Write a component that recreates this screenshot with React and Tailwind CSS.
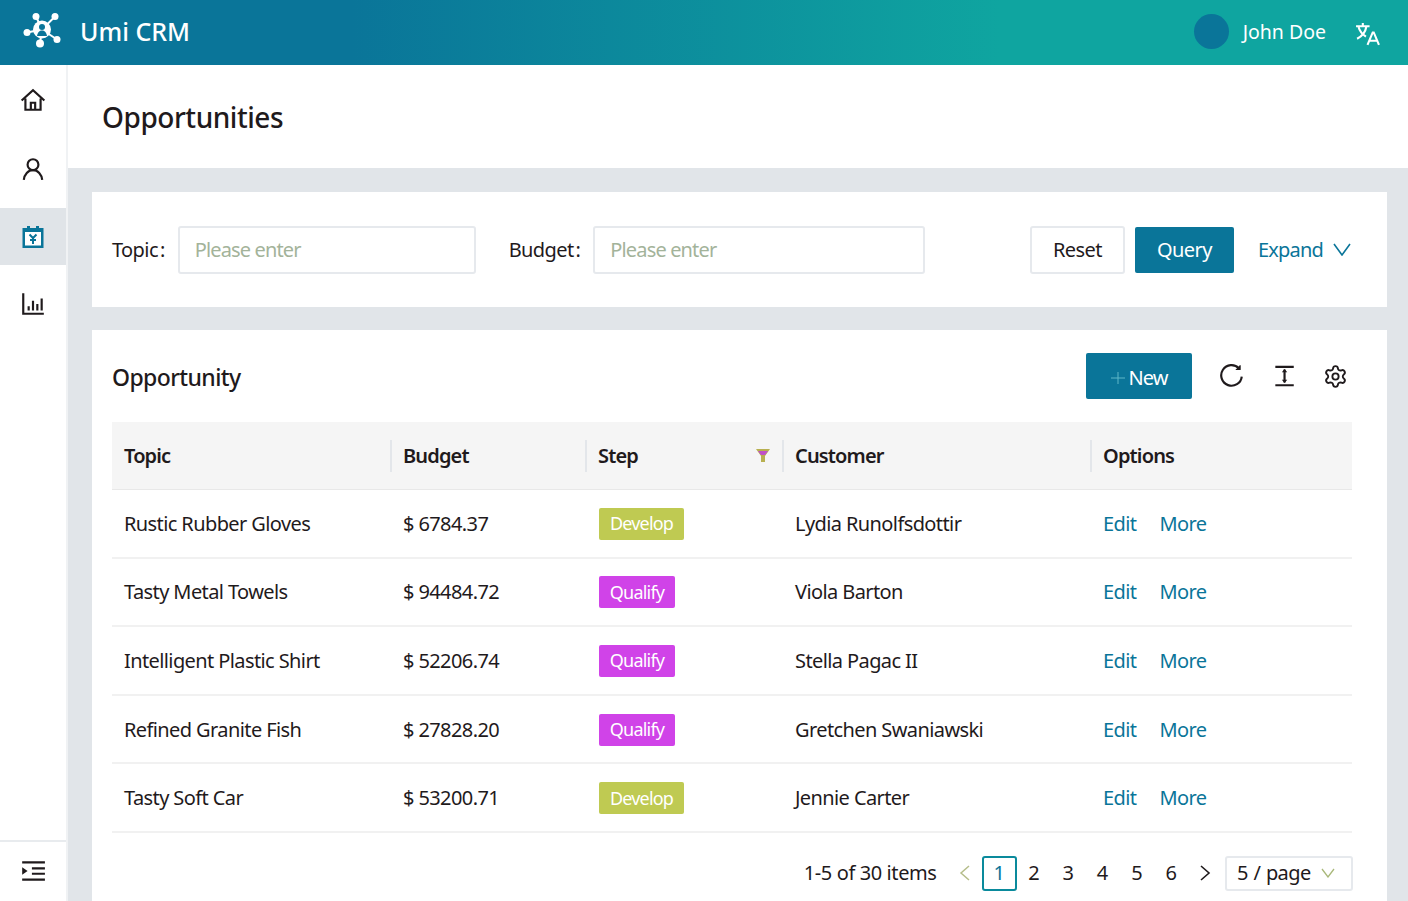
import { Settings } from 'lucide-react';

const rows = [
  { topic: 'Rustic Rubber Gloves', budget: '$ 6784.37', step: 'Develop', customer: 'Lydia Runolfsdottir' },
  { topic: 'Tasty Metal Towels', budget: '$ 94484.72', step: 'Qualify', customer: 'Viola Barton' },
  { topic: 'Intelligent Plastic Shirt', budget: '$ 52206.74', step: 'Qualify', customer: 'Stella Pagac II' },
  { topic: 'Refined Granite Fish', budget: '$ 27828.20', step: 'Qualify', customer: 'Gretchen Swaniawski' },
  { topic: 'Tasty Soft Car', budget: '$ 53200.71', step: 'Develop', customer: 'Jennie Carter' },
];

const cols = 'grid grid-cols-[279px_195px_197px_308px_261px]';

function Logo() {
  return (
    <svg viewBox="0 0 40 40" className="w-10 h-10 text-white" fill="currentColor" stroke="currentColor">
      <g strokeWidth="2">
        <line x1="20" y1="17.500" x2="14" y2="4.500" />
        <line x1="20" y1="17.500" x2="33" y2="4.500" />
        <line x1="20" y1="17.500" x2="5" y2="20.500" />
        <line x1="20" y1="17.500" x2="18" y2="31" />
        <line x1="20" y1="17.500" x2="35" y2="27.500" />
      </g>
      <circle cx="14" cy="4.500" r="3.500" stroke="none" />
      <circle cx="33" cy="4.500" r="3.500" stroke="none" />
      <circle cx="5" cy="20.500" r="3.500" stroke="none" />
      <circle cx="18" cy="31.500" r="4" stroke="none" />
      <circle cx="35" cy="27.500" r="3.500" stroke="none" />
      <circle cx="20" cy="17.500" r="9" stroke="none" />
      <circle cx="20" cy="15" r="3" fill="#0a7599" stroke="none" />
      <path d="M15 24c.8-4 2.500-5.500 5-5.500s4.200 1.500 5 5.500z" fill="#0a7599" stroke="none" />
    </svg>
  );
}

function NavIcon({ children }) {
  return (
    <svg viewBox="0 0 24 24" className="w-[26px] h-[26px]" fill="none" stroke="currentColor" strokeWidth="2">
      {children}
    </svg>
  );
}

function Sidebar() {
  return (
    <aside className="w-[68px] shrink-0 bg-white flex flex-col border-r-2 border-[#f0f2f4] text-[#1f1a1c]">
      <div className="h-[69px] flex items-center justify-center">
        <NavIcon>
          <path d="M1.500 12.500 12 3l10.500 9.500M5 10.500V21h14V10.500M10 21v-6.500h4V21" />
        </NavIcon>
      </div>
      <div className="h-[69px] flex items-center justify-center">
        <NavIcon>
          <circle cx="12" cy="8" r="5" />
          <path d="M3.500 22c.5-5 4-9 8.500-9s8 4 8.500 9" />
        </NavIcon>
      </div>
      <div className="h-[57px] w-[66px] mt-[5px] bg-[#e0e4e8] flex items-center justify-center">
        <svg viewBox="0 0 24 24" className="w-6 h-6">
          <rect x="1.500" y="3" width="21" height="20" fill="#0a7599" />
          <rect x="4" y="7" width="16" height="13.500" fill="#fff" />
          <rect x="6" y="1" width="3" height="6" fill="#0a7599" />
          <rect x="15" y="1" width="3" height="6" fill="#0a7599" />
          <path d="M8.500 9.500 12 13l3.500-3.500M12 13v6M9 15h6" stroke="#0a7599" strokeWidth="2" fill="none" />
        </svg>
      </div>
      <div className="h-[69px] mt-[4px] flex items-center justify-center">
        <NavIcon>
          <path d="M3 2v19h19" />
          <path d="M8 18v-4M12 18V9M16 18v-6M20 18V7" />
        </NavIcon>
      </div>
      <div className="mt-auto h-[60px] mb-px border-t-2 border-[#e8ebee] flex items-center justify-center">
        <NavIcon>
          <path d="M2 4h21M11 9.500h12M11 14.500h12M2 20h21" />
          <path d="M2 8.500v7l5-3.500z" fill="currentColor" stroke="none" />
        </NavIcon>
      </div>
    </aside>
  );
}

function SearchField({ label, width }) {
  return (
    <div className="flex items-center">
      <span className="text-[#1f1a1c]">{label}</span>
      <span className="ml-0.5 text-[#1f1a1c]">:</span>
      <div className={`${width} h-12 ml-[13px] border-2 border-[#e6e9ed] rounded-[3px] flex items-center pt-px px-[15px] text-[#a3b39a] tracking-[-0.85px]`}>
        Please enter
      </div>
    </div>
  );
}

function Tag({ step }) {
  if (step === 'Develop') {
    return <span className="ml-px h-8 w-[85px] rounded-[2px] bg-[#bfca52] text-white flex items-center justify-center text-[18px] tracking-[-0.8px]">Develop</span>;
  }
  return <span className="ml-px h-8 w-[76px] rounded-[2px] bg-[#d043e8] text-white flex items-center justify-center text-[18px] tracking-[-0.8px]">Qualify</span>;
}

function HeadCell({ children, first }) {
  return (
    <div className="relative flex items-center px-3 h-full font-semibold text-[#1f1a1c] tracking-[-0.85px]">
      {!first && <span className="absolute left-[-1px] top-[18px] h-8 w-[2px] bg-[#e3e6ea]" />}
      {children}
    </div>
  );
}

export default function App() {
  return (
    <div className="h-screen overflow-hidden flex flex-col bg-[#e1e5e9] text-[20px] font-['Noto_Sans',sans-serif] tracking-[-0.6px]">
      <header className="h-[65px] shrink-0 flex items-center pb-0.5 bg-[linear-gradient(90deg,#0a7599_25%,#0fa5a0_71%)] text-white">
        <div className="ml-[22px] w-10"><Logo /></div>
        <span className="ml-[18px] text-[25px] font-medium tracking-normal">Umi CRM</span>
        <div className="ml-auto flex items-center">
          <span className="w-[35px] h-[35px] rounded-full bg-[#0a7599]" />
          <span className="ml-[14px] tracking-normal text-[19.500px]">John Doe</span>
          <svg viewBox="0 0 24 24" className="w-[25px] h-[25px] ml-[29px] mr-[28px] mt-[3px]" fill="none" stroke="currentColor" strokeWidth="2">
            <path d="M1 5h13M7.500 2v3M11 5c-1 6-5 10-9 12M3.500 6c1 4 4 7 7 9" />
            <path d="M12 23l5-12h1l5 12M14 19h7" />
          </svg>
        </div>
      </header>

      <div className="flex-1 min-h-0 flex">
        <Sidebar />
        <main className="flex-1 min-w-0 flex flex-col">
          <div className="h-[103px] shrink-0 bg-white flex items-center pl-[34px]">
            <h1 className="text-[28px] font-medium text-[#1f1a1c] tracking-[-0.45px]">Opportunities</h1>
          </div>

          <section className="mt-[24px] ml-6 mr-[21px] h-[115px] shrink-0 bg-white flex items-center pl-5 pr-9">
            <SearchField label="Topic" width="w-[298px]" />
            <div className="ml-[33px]">
              <SearchField label="Budget" width="w-[332px]" />
            </div>
            <button className="ml-auto h-12 w-[95px] border-2 border-[#e6e9ed] rounded-[3px] text-[#1f1a1c] bg-white">Reset</button>
            <button className="ml-[10px] h-[46px] w-[99px] rounded-[2px] bg-[#0a7599] text-white">Query</button>
            <span className="ml-6 text-[#0a7599] tracking-[-0.8px]">Expand</span>
            <svg viewBox="0 0 18 13" className="ml-[10px] w-[18px] h-[13px] text-[#0a7599]" fill="none" stroke="currentColor" strokeWidth="1.600">
              <path d="M1 1l8 11 8-11" />
            </svg>
          </section>

          <section className="mt-[23px] ml-6 mr-[21px] flex-1 bg-white pl-5 pr-[35px]">
            <div className="h-[92px] flex items-center">
              <h2 className="pt-0.5 text-[23px] font-medium text-[#1f1a1c]">Opportunity</h2>
              <button className="ml-auto h-[46px] w-[106px] pt-[3px] rounded-[2px] bg-[#0a7599] text-white flex items-center justify-center gap-[4px] tracking-[-1px]">
                <svg viewBox="0 0 14 14" className="w-[14px] h-[14px] text-[#5fb8c8]" fill="none" stroke="currentColor" strokeWidth="1">
                  <path d="M0 7h14M7 1v12" />
                </svg>
                New
              </button>
              <div className="ml-[27px] mr-[4px] flex items-center gap-[26px] text-[#1f1a1c]">
                <svg viewBox="0 0 24 24" className="w-[26px] h-[26px]" fill="none" stroke="currentColor" strokeWidth="2">
                  <path d="M21 12.500A9.500 9.500 0 1 1 18.500 5" />
                  <path d="M19.500 2v4h-4" fill="currentColor" strokeWidth="1" />
                </svg>
                <svg viewBox="0 0 24 24" className="w-[26px] h-[26px]" fill="none" stroke="currentColor" strokeWidth="2">
                  <path d="M4 3.500h17M4 20.500h17M12.500 6v12" />
                  <path d="M12.500 5.500l-2.500 3h5zM12.500 18.500l-2.500-3h5z" fill="currentColor" stroke="none" />
                </svg>
                <Settings size={25} strokeWidth={1.8} />
              </div>
            </div>

            <div className={`${cols} h-[68px] bg-[#f5f5f5] border-b border-[#e8e8e8]`}>
              <HeadCell first>Topic</HeadCell>
              <HeadCell>Budget</HeadCell>
              <HeadCell>
                Step
                <svg viewBox="0 0 16 16" className="absolute right-3 top-[26px] w-4 h-4">
                  <path d="M1 1h14l-5 7v6H6V8z" fill="#b8b050" />
                  <path d="M3 3h10L10 7H6z" fill="#c050c8" />
                </svg>
              </HeadCell>
              <HeadCell>Customer</HeadCell>
              <HeadCell>Options</HeadCell>
            </div>

            {rows.map((row) => (
              <div key={row.topic} className={`${cols} h-[68.600px] pt-px border-b-2 border-[#f1f1f1] items-center text-[#1f1a1c]`}>
                <div className="px-3">{row.topic}</div>
                <div className="px-3">{row.budget}</div>
                <div className="px-3 flex"><Tag step={row.step} /></div>
                <div className="px-3">{row.customer}</div>
                <div className="px-3 flex gap-[23px] text-[#0a7599]">
                  <span>Edit</span>
                  <span>More</span>
                </div>
              </div>
            ))}

            <div className="mt-[23px] -mr-px flex items-center justify-end text-[#1f1a1c]">
              <span className="mr-[22px] tracking-[-0.4px]">1-5 of 30 items</span>
              <svg viewBox="0 0 12 16" className="w-3 h-4 mr-[11px] text-[#b5bd8a]" fill="none" stroke="currentColor" strokeWidth="1.500">
                <path d="M10 1L2 8l8 7" />
              </svg>
              <span className="w-[35px] h-[35px] border-2 border-[#0a8a9c] rounded-[3px] text-[#0a7599] flex items-center justify-center">1</span>
              {['2', '3', '4', '5', '6'].map((n) => (
                <span key={n} className="w-[34.300px] text-center">{n}</span>
              ))}
              <svg viewBox="0 0 12 16" className="w-3 h-4 ml-[11px] mr-[14px]" fill="none" stroke="currentColor" strokeWidth="1.600">
                <path d="M2 1l8 7-8 7" />
              </svg>
              <div className="w-[128px] h-[35px] border-2 border-[#e6e9ed] rounded-[3px] flex items-center pl-[10px] [word-spacing:1px]">
                5 / page
                <svg viewBox="0 0 14 10" className="ml-auto mr-[16px] w-[14px] h-[10px] text-[#a9b87a]" fill="none" stroke="currentColor" strokeWidth="1.300">
                  <path d="M1 1l6 8 6-8" />
                </svg>
              </div>
            </div>
          </section>
        </main>
      </div>
    </div>
  );
}
